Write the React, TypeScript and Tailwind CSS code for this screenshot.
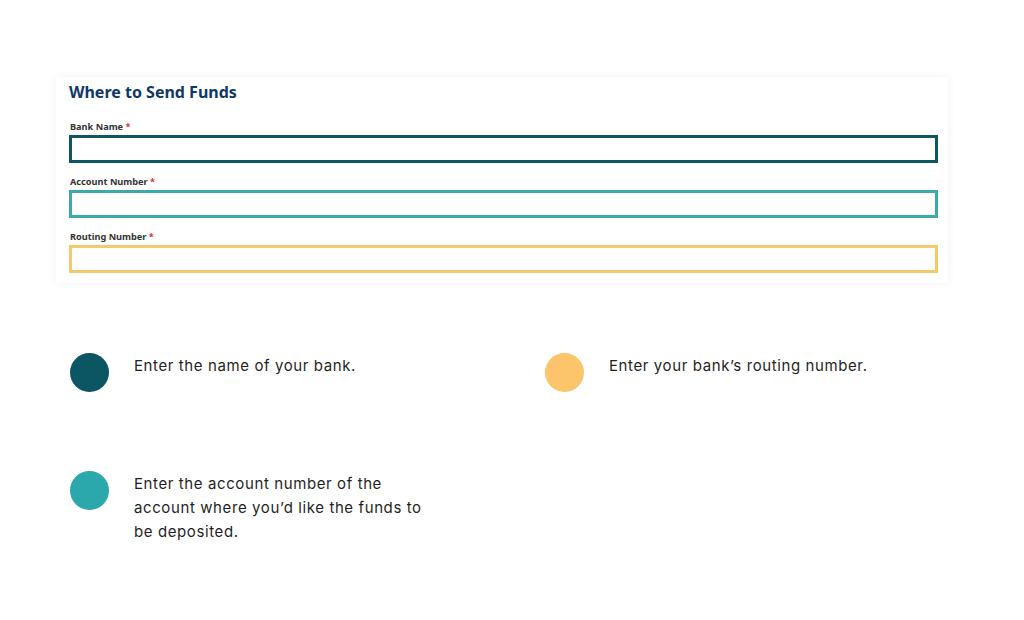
import React from 'react'

const fields = [
  { label: 'Bank Name', border: 'border-[#0e5661]' },
  { label: 'Account Number', border: 'border-[#3ba9ae]' },
  { label: 'Routing Number', border: 'border-[#f5ca6d]' },
]

const notes = [
  { color: 'bg-[#0b5662]', text: 'Enter the name of your bank.' },
  { color: 'bg-[#fcc46b]', text: 'Enter your bank\u2019s routing number.' },
  { color: 'bg-[#2ba8ab]', text: 'Enter the account number of the account where you\u2019d like the funds to be deposited.' },
]

export default function App() {
  return (
    <div className="w-[1024px] h-[620px] bg-white pt-[77px] pl-[56px]">
      {/* form card */}
      <div className="w-[892px] bg-white rounded-[3px] shadow-[0_0_10px_rgba(0,0,0,0.06)] pl-[13px] pr-[10px] pt-[1px] pb-[10px]">
        <h2 className="text-[#0f3866] text-[16px] font-bold leading-[28px] font-['Noto_Sans',sans-serif]">
          Where to Send Funds
        </h2>
        <div className="mt-[15px] flex flex-col gap-[13px]">
          {fields.map((f) => (
            <div key={f.label}>
              <div className="text-[9.2px] font-bold text-[#333] leading-[12px] mb-[2px] ml-[1px] font-['Noto_Sans',sans-serif]">
                {f.label} <span className="text-[#d23b3b]">*</span>
              </div>
              <div className={`h-[28px] border-[3px] ${f.border} bg-white`} />
            </div>
          ))}
        </div>
      </div>

      {/* legend */}
      <div className="mt-[70px] ml-[14px] grid grid-cols-[475px_1fr] gap-y-[79px] font-['Inter',sans-serif] text-[15px] tracking-[0.6px] leading-[24px] text-[#1f1f1f]">
        {notes.map((n) => (
          <div key={n.text} className="flex items-start gap-[25px]">
            <div className={`w-[39px] h-[39px] rounded-full flex-shrink-0 ${n.color}`} />
            <p className="w-[292px] pt-[1px]">{n.text}</p>
          </div>
        ))}
      </div>
    </div>
  )
}
